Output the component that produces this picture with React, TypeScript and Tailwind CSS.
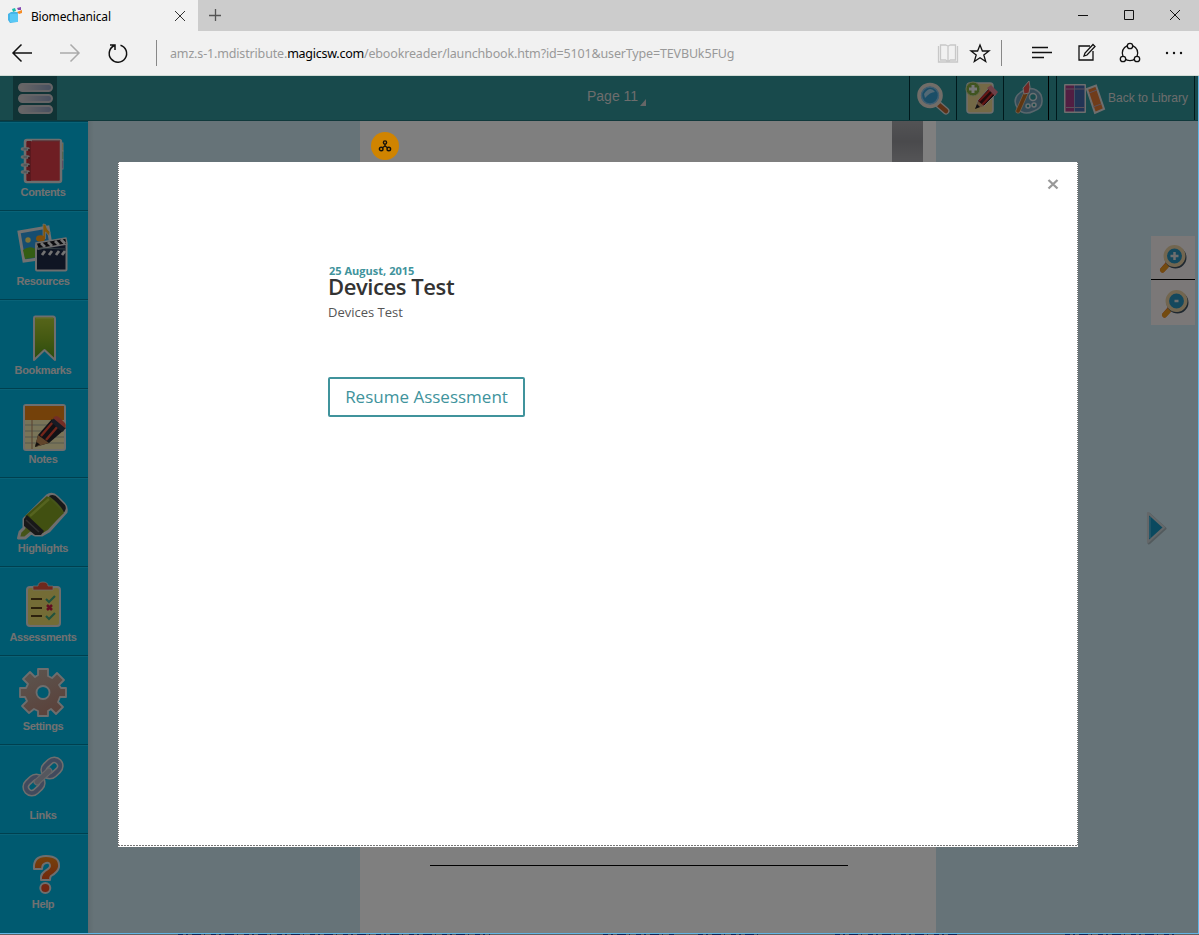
import React from "react";

const halo = { stroke: "#dcdcdc", strokeWidth: 3, strokeLinejoin: "round" as const };

function Item({ label, children }: { label: string; children: React.ReactNode }) {
  return (
    <div className="relative h-[89px] w-[88px] shrink-0 pr-[3px] shadow-[inset_0_1px_0_#00809f,inset_0_2px_0_#12c4ee]">
      <svg width="86" height="64" viewBox="0 0 86 64" className="block">{children}</svg>
      <div className="pl-[1px] text-center text-[11px] leading-[14px] font-bold tracking-[-0.35px] text-[#e2e2e2]">{label}</div>
    </div>
  );
}

function Sidebar() {
  return (
    <nav className="flex h-[812px] w-[88px] shrink-0 flex-col overflow-hidden bg-[#00b4e0]">
      <Item label="Contents">
        <rect x="57" y="22" width="6" height="8" fill="#f5b51a" stroke="#ddd" />
        <rect x="57" y="30" width="6" height="9" fill="#58a82c" stroke="#ddd" />
        <rect x="57" y="39" width="6" height="9" fill="#7d2c98" stroke="#ddd" />
        <rect x="25" y="19" width="36" height="42" rx="2" fill="#dc3c46" {...halo} strokeWidth="2.5" />
        <rect x="27" y="20" width="4" height="40" fill="#b4323c" />
        <path d="M32 20H60" stroke="#b4323c" />
        {[28, 36, 44, 51].map((y) => (
          <g key={y}><path d={`M22.5 ${y}H28`} stroke="#d0d0d0" strokeWidth="3.6" strokeLinecap="round" /><path d={`M23.5 ${y}H27`} stroke="#7a9aa5" strokeWidth="1" /><circle cx="29" cy={y + 1} r="1" fill="#642328" /></g>
        ))}
      </Item>
      <Item label="Resources">
        <path d="M19 22L48 17L53 47L24 51Z" fill="#2d9be0" stroke="#e2e2e2" strokeWidth="3" />
        <path d="M23 40Q31 34 38 41L49 38L51 45L25 49Z" fill="#68ba28" />
        <circle cx="28" cy="30" r="2.7" fill="#ffe470" />
        <path d="M43 28V14L45.5 14.5Q47 20 50 22L49 26Q47 23 45.5 22V29" fill="#ffad16" stroke="#ddd" strokeWidth=".8" />
        <ellipse cx="40.5" cy="28.5" rx="4.5" ry="3.2" fill="#ff9f16" />
        <rect x="36" y="34" width="30.5" height="26.5" rx="1" fill="#1f2a47" {...halo} strokeWidth="2" />
        <path d="M36 33L66 28L67 34L38 39Z" fill="#17171d" {...halo} strokeWidth="1.5" />
        <path d="M41 33l4 4M48 32l4 4M55 31l4 4M61 29.5l4 4" stroke="#e6e6e6" strokeWidth="2.8" />
        <path d="M45 41l-3 4M52 41l-3 4M59 41l-3 4M65 41l-3 4" stroke="#e6e6e6" strokeWidth="2.8" />
        <path d="M37 38L66 39" stroke="#5e7980" />
      </Item>
      <Item label="Bookmarks">
        <defs><linearGradient id="bookmark" x2="0" y2="1"><stop stopColor="#b0cc35" /><stop offset=".5" stopColor="#8ab324" /><stop offset="1" stopColor="#55991d" /></linearGradient></defs>
        <path d="M35 17.5H53Q55 17.5 55 20V61L44.5 51L34 61V19Q34 17.5 35 17.5Z" fill="url(#bookmark)" {...halo} strokeWidth="2" />
        <path d="M36 19H53" stroke="#cbdf60" />
      </Item>
      <Item label="Notes">
        <rect x="24" y="17" width="41" height="45" rx="2" fill="#f3e8b0" {...halo} strokeWidth="2" />
        <path d="M25 18H64V32H25Z" fill="#e98215" />
        <path d="M25 37H64M25 43H64M25 49H64M25 55H64" stroke="#aab29e" /><path d="M32 32V61" stroke="#b3815c" />
        <path d="M35 59L38 47L52 31L64 42L49 55Z" fill="#22222a" /><path d="M35 59L38 47L49 55Z" fill="#c28b57" /><path d="M35 59L36.5 54L40 56.5Z" fill="#26221f" />
        <path d="M41 48L53 34M46 52L58 38" stroke="#e94a35" strokeWidth="2.4" /><path d="M51 34L54 30L66 40L62 44Z" fill="#313749" /><path d="M53 30Q56 26 60 30L64 34Q67 37 65 40Z" fill="#e65b4a" />
      </Item>
      <Item label="Highlights">
        <path d="M24 51L20 55L18.5 61L25 61L31 56L35 58H42L49 54L66 35Q67 30 64 27L57 20Q52 15 47 19L24 42Z" fill="#8aa832" {...halo} strokeWidth="3" />
        <path d="M25 39L47 19L64 36L43 56Z" fill="#82a023" /><path d="M30 39L49 22" stroke="#aac73e" strokeWidth="2.5" />
        <path d="M24 42L27 38L44 54L41 58H35L24 49Z" fill="#303033" /><path d="M26 43L39 55" stroke="#616161" strokeWidth="1.5" />
        <path d="M49 19Q54 16 58 21L65 28Q67 32 64 35.5Q61 28 49 19Z" fill="#303033" />
      </Item>
      <Item label="Assessments">
        <rect x="27" y="21" width="33" height="39" rx="3" fill="#e9d96d" {...halo} strokeWidth="2" /><path d="M33 20H38Q38 16 43 16Q48 16 48 20H53V24H33Z" fill="#df523b" stroke="#ddd" strokeWidth=".7" />
        <path d="M31 33H42M31 42H42M31 50H42" stroke="#5b421b" strokeWidth="2" /><path d="M46 33l3 3 6-6M46 50l3 3 6-6" fill="none" stroke="#44a57b" strokeWidth="2.2" /><path d="M47 39l5 5m0-5l-5 5" stroke="#c41d43" strokeWidth="2.5" />
      </Item>
      <Item label="Settings">
        <defs><linearGradient id="gear" x2="0.5" y2="1"><stop stopColor="#b8ada2" /><stop offset="1" stopColor="#b78678" /></linearGradient></defs>
        <path fillRule="evenodd" d="M38 14H48V21L52 23L57 18L64 25L59 30L61 33H66V42H60L58 47L63 52L56 59L51 54L48 56V61H38V56L34 54L29 58L22 51L27 46L25 42H20V33H26L28 29L23 24L30 17L35 22L38 20ZM43 31A6.5 6.5 0 1 0 43 44A6.5 6.5 0 1 0 43 31" fill="url(#gear)" {...halo} strokeWidth="1.8" />
      </Item>
      <Item label="Links">
        {[[34, 41], [52, 24]].map(([x, y]) => <g key={x} transform={`rotate(-43 ${x} ${y})`}><rect x={x - 9} y={y - 6} width="18" height="12" rx="6" fill="none" stroke="#ddd" strokeWidth="7" /><rect x={x - 9} y={y - 6} width="18" height="12" rx="6" fill="none" stroke="#8294bb" strokeWidth="4" /></g>)}
        <path d="M37 38L49 27" stroke="#cfcfd2" strokeWidth="7" strokeLinecap="round" /><path d="M37 38L49 27" stroke="#aaaebd" strokeWidth="4.5" strokeLinecap="round" />
      </Item>
      <Item label="Help">
        <defs><linearGradient id="help" x2="0" y2="1"><stop stopColor="#eb8516" /><stop offset="1" stopColor="#e3501a" /></linearGradient></defs>
        <path d="M34 36Q33 23 46 23Q60 23 59 34Q58 39 51 43Q50 44 50 47H41V44Q41 41 45 38Q50 35 50 33Q50 29 46 30Q42 31 42 36Z" fill="url(#help)" {...halo} strokeWidth="2" /><circle cx="45.3" cy="55" r="5" fill="#e64a22" {...halo} strokeWidth="2" />
      </Item>
    </nav>
  );
}

function Chrome() {
  return (
    <header className="h-[76px] shrink-0 border-b border-[#d1dcd6] bg-[#f1f1f1] font-['Noto_Sans',sans-serif]">
      <div className="flex h-[31px] bg-[#cccccc]">
        <div className="flex w-[198px] items-center bg-[#f1f1f1] pl-2">
          <svg width="16" height="18" viewBox="0 0 16 18"><path d="M0 7L3 5H10L9 15L2 16L0 13Z" fill="#45b5e8" /><path d="M2 7H10V15H2Z" fill="#58c8f5" /><path d="M4 2L7 1L8 4L5 5Z" fill="#18bcaa" /><path d="M9 1L13 0L13 3L10 3Z" fill="#8449b0" /><path d="M9 5L14 3L14 6L11 7Z" fill="#f68b24" /></svg>
          <span className="mt-[2px] ml-[7px] w-[140px] text-[12px] leading-4 tracking-[-0.18px] text-black">Biomechanical</span>
          <svg width="18" height="18" viewBox="0 0 18 18"><path d="M4 4L14 14M14 4L4 14" stroke="#333" strokeWidth="1" /></svg>
        </div>
        <svg width="34" height="31"><path d="M11 15.5H23M17.5 9V21" stroke="#555" strokeWidth="1.3" /></svg>
        <div className="grow" />
        <svg width="138" height="31" viewBox="1061 0 138 31" fill="none" stroke="#111"><path d="M1078 15.5H1088M1124.5 10.5H1133.5V19.5H1124.5ZM1170 10L1180 20M1180 10L1170 20" /></svg>
      </div>
      <div className="flex h-[44px] items-center">
        <svg width="170" height="44" viewBox="0 31 170 44" fill="none" stroke="#111" strokeWidth="1.5"><path d="M32 53H13M21.5 44.5L13 53L21.5 61.5" /><path d="M60 53H79M70.5 44.5L79 53L70.5 61.5" stroke="#aaa" /><path d="M114.5 45.5A8.7 8.7 0 1 0 120.5 45.2M110 45H115V50" /><path d="M156.5 40V66" stroke="#888" strokeWidth="1" /></svg>
        <div className="mt-[2px] w-[760px] whitespace-nowrap text-[12.5px] leading-5 tracking-[-0.155px] text-[#999]">amz.s-1.mdistribute.<span className="tracking-[-0.25px] text-black">magicsw.com</span>/ebookreader/launchbook.htm?id=5101&amp;userType=TEVBUk5FUg</div>
        <svg width="269" height="44" viewBox="930 31 269 44" fill="none" stroke="#111" strokeWidth="1.3"><path d="M948 46L945.5 45H940.5V60H945.5L948 61.5L950.5 60H955.5V45H950.5ZM948 46V61M938.5 46V62H957.5V46" stroke="#c8c8c8" strokeWidth="1.3" /><path d="M980 45L982.4 51H989L983.8 55L985.7 61.5L980 57.8L974.3 61.5L976.2 55L971 51H977.6Z" /><path d="M1001.5 40V66" stroke="#888" strokeWidth="1" /><path d="M1032 47.5H1048M1032 52.5H1052M1032 57.5H1044" /><path d="M1090 46H1079V60H1093V51" /><path d="M1084 56L1085 53L1093 44.5L1095 46.5L1087 55Z" /><circle cx="1130" cy="53" r="7.7" /><g fill="#f1f1f1"><circle cx="1130" cy="46" r="2.7" /><circle cx="1123" cy="59" r="2.7" /><circle cx="1137" cy="59" r="2.7" /></g><g fill="#111" stroke="none"><circle cx="1167" cy="53" r="1.2" /><circle cx="1174" cy="53" r="1.2" /><circle cx="1181" cy="53" r="1.2" /></g></svg>
      </div>
    </header>
  );
}

function TopBar() {
  return (
    <div className="flex h-[45px] shrink-0 border-b border-[#207378] bg-[#309499]">
      <div className="ml-[13px] flex w-11 flex-col items-center gap-[2px] bg-[#21676a] pt-[7px] pl-[1px]">
        {[0, 1, 2].map((n) => <div key={n} className="h-[9px] w-[35px] rounded-full border-2 border-[#cbc8cc] bg-linear-to-r from-[#d2cdcd] to-[#91a1bf]" />)}
      </div>
      <div className="flex w-[852px] pl-[530px] pt-[10px] text-[14px] leading-[20px] text-[#dadada]">Page 11<svg width="8" height="20" className="ml-[1px]"><path d="M1 20L7 13V20Z" fill="#ccc" /></svg></div>
      <div className="w-[47px] border-l border-[#003339]"><svg width="46" height="44"><path d="M28 28L36 35" stroke="#dadada" strokeWidth="7" strokeLinecap="round" /><path d="M29 29L36 35" stroke="#b86531" strokeWidth="4.5" strokeLinecap="round" /><circle cx="20" cy="19.5" r="10.8" fill="#348fc1" stroke="#e3dad1" strokeWidth="4" /><circle cx="20" cy="19.5" r="8.5" fill="#379cce" stroke="#84bfe4" strokeWidth="1.5" /><path d="M14 18Q20 9 25 16Q20 16 15 22Z" fill="#a6d3ea" /></svg></div>
      <div className="w-[47px] border-l border-[#003339]"><svg width="46" height="44"><rect x="10" y="7" width="26" height="30" rx="3" fill="#e8d38c" stroke="#ddd" strokeWidth="1.5" /><path d="M19 31L21 24L32 12L39 18L27 30Z" fill="#421719" stroke="#ddd" /><path d="M22 25L33 14M25 29L36 17" stroke="#ca2c2a" strokeWidth="2" /><path d="M30 12L34 9L41 16L38 20Z" fill="#df8190" /><path d="M18 33L21 25L27 30Z" fill="#d5a070" /><path d="M18 33L20 28L23 31Z" fill="#222" /><circle cx="16" cy="13" r="7" fill="#80a940" stroke="#c5d1a0" /><path d="M12 13H20M16 9V17" stroke="#eee" strokeWidth="3" /></svg></div>
      <div className="w-[45px] border-l border-[#003339]"><svg width="44" height="44"><path d="M17 16Q30 8 37 19Q41 31 30 35Q20 40 14 33Q7 23 17 16Z" fill="#6798b1" stroke="#b3cdd8" strokeWidth="1.5" /><g fill="#309499" stroke="#d5dfe3" strokeWidth="1.5"><circle cx="29" cy="21" r="3.5" /><circle cx="24" cy="30" r="2" /><circle cx="30" cy="29" r="2" /></g><path d="M14 35L22 17" stroke="#dec2a2" strokeWidth="5" strokeLinecap="round" /><path d="M14 35L22 17" stroke="#bd6d25" strokeWidth="3.5" strokeLinecap="round" /><path d="M20 18L19 12L25 5Q27 11 25 17Z" fill="#df504a" stroke="#ddd" strokeWidth="1" /></svg></div>
      <div className="w-2 border-l border-black" />
      <div className="flex w-[139px] items-center border-l border-r border-[#003339] text-[12px] text-[#dadada]"><svg width="51" height="44" viewBox="2 0 51 44" className="shrink-0"><rect x="9" y="8" width="22" height="29" rx="1" fill="#ddd" /><path d="M10.5 9.5H19V35.5H10.5Z" fill="#a53c84" /><path d="M19.5 9.5H29.5V35.5H19.5Z" fill="#4568ab" /><path d="M32 13L41 9.5L49 33L40 37Z" fill="#e17834" stroke="#ddd" strokeWidth="2" /><path d="M11 31.5H30M11 13H30M34 17l8-3M38 31l8-3" stroke="#b5a2b7" /></svg><span className="whitespace-nowrap">Back to Library</span></div>
    </div>
  );
}

function Magnifier({ minus = false }: { minus?: boolean }) {
  const x = minus ? 25.5 : 23.5;
  return <svg width="44" height="43" className="bg-[#f7f1f0]"><path d={`M${x - 6} 27L${x - 12} 34`} stroke="#dd6832" strokeWidth="5" strokeLinecap="round" /><path d={`M${x - 8} 30L${x - 12} 34`} stroke="#e79620" strokeWidth="5" strokeLinecap="round" /><circle cx={x + 1} cy="21.5" r="10" fill="none" stroke="#3f5060" strokeWidth="2" /><circle cx={x} cy="20" r="9.2" fill="#2990ba" stroke="#e4cda0" strokeWidth="3.5" /><path d={`M${x - (minus ? 2 : 4)} 20H${x + (minus ? 2 : 4)}`} stroke="#ddd" strokeWidth="2.5" />{!minus && <path d={`M${x} 16V24`} stroke="#ddd" strokeWidth="2.5" />}</svg>;
}

export default function App() {
  return (
    <div className="flex h-[935px] w-[1199px] flex-col overflow-hidden bg-[#606060] font-['Liberation_Sans',Arial,sans-serif]">
      <Chrome />
      <div className="relative flex h-[858px] shrink-0 flex-col border-r border-b border-[#62b6e5] bg-[#cde7f0]">
        <TopBar />
        <main className="flex h-[812px] overflow-hidden">
          <Sidebar />
          <div className="flex w-[272px] shrink-0 bg-linear-to-r from-[#bed6df] to-[#cde7f0] to-[6px]" />
          <section className="relative w-[576px] shrink-0 bg-white">
            <div className="ml-[532px] h-[41px] w-[31px] bg-linear-to-b from-[#a6a6aa] via-[#949499] to-[#aaaaae]" />
            <div className="mt-[702px] ml-[70px] h-[2px] w-[418px] border-b border-black" />
          </section>
          <aside className="flex w-[262px] flex-col items-end pt-[115px] pr-[3px]">
            <div className="flex flex-col bg-black"><Magnifier /><div className="h-[1px]" /><div className="h-[45px] bg-[#f7f1f0] pt-[1px]"><Magnifier minus /></div></div>
            <svg width="52" height="44" className="mt-[176px]"><path d="M6 12L22 26.5L6 41Z" transform="translate(0 1)" fill="none" stroke="#a5b5bb" strokeWidth="3" strokeLinejoin="round" /><path d="M5 12L21 26.5L5 41Z" fill="#1593be" stroke="#c8cfd2" strokeWidth="2.2" strokeLinejoin="round" /><path d="M7 16V37" stroke="#64bee0" /></svg>
          </aside>
        </main>
        <div className="absolute inset-0 bg-black/50" />
        <div className="absolute top-[56px] left-[371px] flex size-7 items-center justify-center rounded-full bg-[#d08400]"><svg width="14" height="14" viewBox="0 0 14 14" fill="none" stroke="#15110a" strokeWidth="1.4"><path d="M7 5V7L4 9M7 7L10 9" /><circle cx="7" cy="3.5" r="1.6" /><circle cx="3.2" cy="10" r="1.8" /><circle cx="10.8" cy="10" r="1.8" /></svg></div>
        <div role="dialog" aria-label="Devices Test" className="absolute top-[86px] left-[118px] h-[685px] w-[960px] bg-white font-['Open_Sans',sans-serif]">
          <div className="flex h-[683px] flex-col items-start border-x border-dotted border-[#777] px-[209px] pt-[103px]">
            <p className="ml-[1px] text-[11px] leading-[12px] font-bold tracking-[0.02px] text-[#40939c]">25 August, 2015</p>
            <h1 className="text-[22px] leading-[18px] font-semibold tracking-[-0.42px] text-[#333]">Devices Test</h1>
            <p className="mt-[7px] text-[13px] leading-5 text-[#555]">Devices Test</p>
            <button className="mt-[55px] h-10 w-[197px] whitespace-nowrap rounded-[2px] border-2 border-[#40939c] text-[17px] leading-9 text-[#40939c]">Resume Assessment</button>
          </div>
          <div className="h-px bg-[repeating-linear-gradient(90deg,#777_0_2px,#fff_2px_3px)]" />
          <button aria-label="Close" className="absolute top-[16px] left-[928px]"><svg width="14" height="14"><path d="M2.5 2L11.5 10.5M11.5 2L2.5 10.5" stroke="#999" strokeWidth="2.3" /></svg></button>
        </div>
      </div>
      <svg width="1199" height="1" className="block shrink-0"><path d="M178 .5H490M603 .5H675M698 .5H760M835 .5H960M1065 .5H1175" stroke="#132552" strokeDasharray="5 3 2 4 9 3 1 6" /></svg>
    </div>
  );
}
